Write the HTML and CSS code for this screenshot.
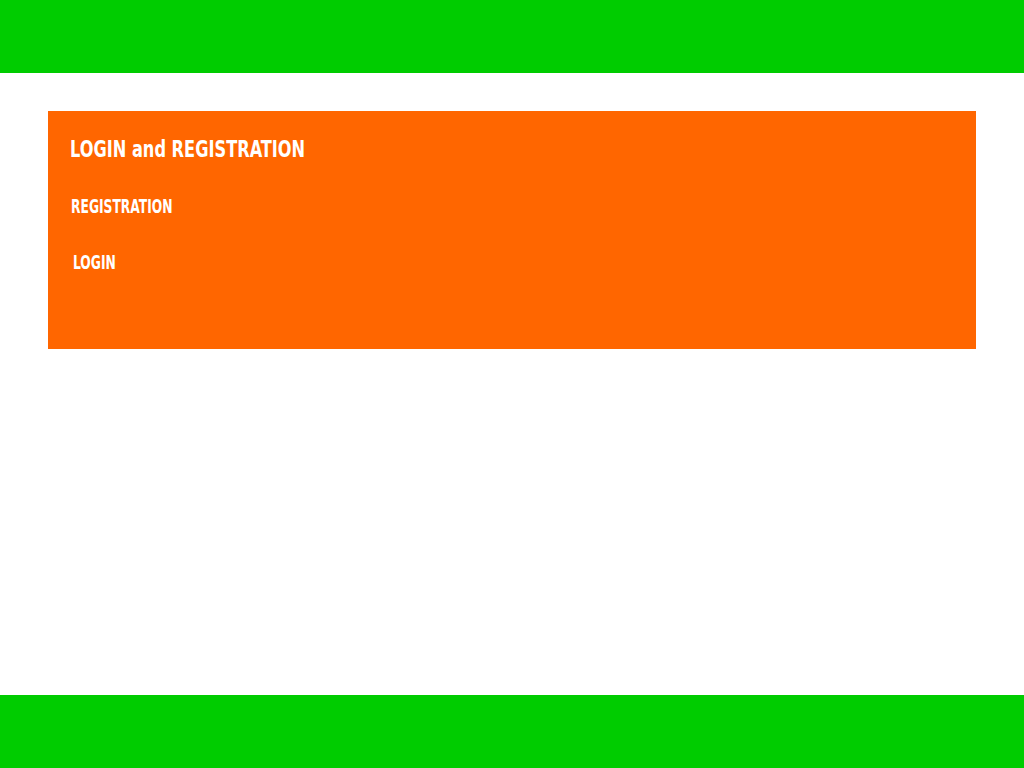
FILE: index.html
```html
<!DOCTYPE html>
<html>
<head>
<meta charset="utf-8">
<link rel="stylesheet" href="styles.css">
</head>
<body>
<div class="page">
  <header class="header"></header>
  <main class="main">
    <section class="panel">
      <h2 class="title">LOGIN and REGISTRATION</h2>
      <a class="link link-reg" href="#">REGISTRATION</a>
      <a class="link link-login" href="#">LOGIN</a>
    </section>
  </main>
  <footer class="footer"></footer>
</div>
</body>
</html>
```
FILE: styles.css
```css
html, body {
  margin: 0;
  padding: 0;
  background: #ffffff;
}
.page {
  display: flex;
  flex-direction: column;
  min-height: 100vh;
}
.header {
  height: 73px;
  background: #00cc00;
}
.main {
  flex: 1;
  padding: 38px 48px 0;
}
.panel {
  background: #ff6600;
  height: 238px;
  box-sizing: border-box;
  padding: 22px 22px 0;
  display: flex;
  flex-direction: column;
  align-items: flex-start;
}
.title {
  margin: 0;
  font-family: "Impact", "DejaVu Sans Condensed", sans-serif;
  font-weight: bold;
  font-size: 22.5px;
  line-height: 32px;
  color: #ffffff;
  transform: scaleX(0.8);
  transform-origin: left center;
}
.link {
  font-family: "Impact", "DejaVu Sans Condensed", sans-serif;
  font-weight: bold;
  font-size: 19px;
  line-height: 20px;
  color: #ffffff;
  text-decoration: none;
  transform: scaleX(0.72);
  transform-origin: left center;
}
.link-reg {
  margin-top: 31px;
  margin-left: 1px;
}
.link-login {
  margin-top: 36px;
  margin-left: 3px;
}
.footer {
  height: 73px;
  background: #00cc00;
}
```
